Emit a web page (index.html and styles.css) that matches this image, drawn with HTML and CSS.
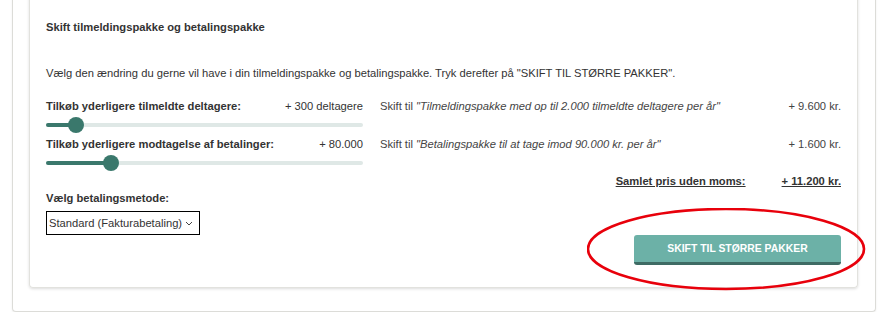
FILE: index.html
```html
<!DOCTYPE html>
<html lang="da">
<head>
  <meta charset="UTF-8">
  <meta name="viewport" content="width=device-width, initial-scale=1.0">
  <title>Skift tilmeldingspakke og betalingspakke</title>
  <link rel="stylesheet" href="styles.css">
</head>
<body>
  <div class="outer-card">
    <div class="card">
      <div class="card-title">Skift tilmeldingspakke og betalingspakke</div>

      <p class="intro">Vælg den ændring du gerne vil have i din tilmeldingspakke og betalingspakke. Tryk derefter på "SKIFT TIL STØRRE PAKKER".</p>

      <div class="pkg-row">
        <div class="pkg-left">
          <div class="pkg-label">
            <span class="label-strong">Tilkøb yderligere tilmeldte deltagere:</span>
            <span>+ 300 deltagere</span>
          </div>
          <div class="slider">
            <div class="slider-track">
              <div class="slider-fill" style="width: 9.5%"></div>
              <div class="slider-thumb" style="left: 9.5%"></div>
            </div>
          </div>
        </div>
        <div class="pkg-right">
          <span>Skift til <em>"Tilmeldingspakke med op til 2.000 tilmeldte deltagere per år"</em></span>
          <span>+ 9.600 kr.</span>
        </div>
      </div>

      <div class="pkg-row">
        <div class="pkg-left">
          <div class="pkg-label">
            <span class="label-strong">Tilkøb yderligere modtagelse af betalinger:</span>
            <span>+ 80.000</span>
          </div>
          <div class="slider">
            <div class="slider-track">
              <div class="slider-fill" style="width: 20.5%"></div>
              <div class="slider-thumb" style="left: 20.5%"></div>
            </div>
          </div>
        </div>
        <div class="pkg-right">
          <span>Skift til <em>"Betalingspakke til at tage imod 90.000 kr. per år"</em></span>
          <span>+ 1.600 kr.</span>
        </div>
      </div>

      <div class="total-row">
        <span>Samlet pris uden moms:</span>
        <span>+ 11.200 kr.</span>
      </div>

      <div class="method">
        <div class="label-strong">Vælg betalingsmetode:</div>
        <div class="select-wrap">
          <select class="method-select">
            <option>Standard (Fakturabetaling)</option>
          </select>
          <svg class="select-arrow" viewBox="0 0 8 5" fill="none">
            <path d="M1 1l3 3 3-3" stroke="#444" stroke-width="1"/>
          </svg>
        </div>
      </div>

      <div class="actions">
        <div class="btn-wrap">
          <button class="btn-submit">SKIFT TIL STØRRE PAKKER</button>
          <svg class="highlight" viewBox="0 0 280 84" fill="none">
            <ellipse cx="139" cy="41" rx="138" ry="40" stroke="#e8000b" stroke-width="2.6"/>
          </svg>
        </div>
      </div>
    </div>
  </div>
</body>
</html>
```

FILE: styles.css
```css
* {
  box-sizing: border-box;
  margin: 0;
  padding: 0;
}

body {
  font-family: 'Liberation Sans', Arial, sans-serif;
  font-size: 11.2px;
  line-height: 16px;
  color: #333;
  background-color: #fff;
  padding: 0 15px 0 12px;
  overflow: hidden;
}

.outer-card {
  margin-top: -10px;
  border: 1px solid #dcdcd8;
  border-top: none;
  border-radius: 0 0 4px 4px;
  box-shadow: 0 1px 2px rgba(0, 0, 0, 0.08);
  padding: 0 17px 23px 16px;
}

.card {
  border: 1px solid #e2e2de;
  border-top: none;
  border-radius: 0 0 4px 4px;
  box-shadow: 0 1px 3px rgba(0, 0, 0, 0.14);
  padding: 29px 16px 22px 16px;
}

.card-title {
  font-weight: bold;
}

.intro {
  margin-top: 30px;
}

.label-strong {
  font-weight: bold;
}

.pkg-row {
  display: grid;
  grid-template-columns: 317px 1fr;
  column-gap: 17px;
}

.intro + .pkg-row {
  margin-top: 17px;
}

.pkg-label,
.pkg-right {
  display: flex;
  justify-content: space-between;
}

.pkg-right {
  color: #444;
  align-items: flex-start;
}

.pkg-right em {
  font-style: italic;
}

.slider {
  height: 22px;
  display: flex;
  align-items: center;
}

.slider-track {
  position: relative;
  width: 100%;
  height: 4px;
  border-radius: 2px;
  background-color: #dfe8e6;
}

.slider-fill {
  height: 100%;
  border-radius: 2px;
  background-color: #3a786c;
}

.slider-thumb {
  position: absolute;
  top: 50%;
  width: 16px;
  height: 16px;
  margin: -8px 0 0 -8px;
  border-radius: 50%;
  background-color: #3a786c;
}

.total-row {
  display: flex;
  justify-content: flex-end;
  gap: 36px;
  margin-top: -1px;
  font-weight: bold;
  text-decoration: underline;
}

.method {
  margin-top: 1px;
}

.select-wrap {
  position: relative;
  width: 154px;
  margin-top: 5px;
}

.method-select {
  display: block;
  width: 154px;
  height: 24px;
  font-family: 'Liberation Sans', Arial, sans-serif;
  font-size: 11.2px;
  color: #333;
  border: 1px solid #000;
  border-radius: 0;
  background-color: #fff;
  padding: 0 16px 0 2px;
  -webkit-appearance: none;
  appearance: none;
}

.select-arrow {
  position: absolute;
  right: 7px;
  top: 10px;
  width: 8px;
  height: 5px;
  pointer-events: none;
}

.actions {
  display: flex;
  justify-content: flex-end;
}

.btn-wrap {
  position: relative;
}

.btn-submit {
  width: 207px;
  height: 30px;
  border: none;
  border-bottom: 3px solid #3e6b64;
  border-radius: 3px;
  background-color: #6cb1a7;
  color: #fff;
  font-family: 'Liberation Sans', Arial, sans-serif;
  font-size: 10.4px;
  font-weight: bold;
  cursor: pointer;
}

.highlight {
  position: absolute;
  left: -47px;
  top: -27px;
  width: 280px;
  height: 84px;
  pointer-events: none;
}
```
